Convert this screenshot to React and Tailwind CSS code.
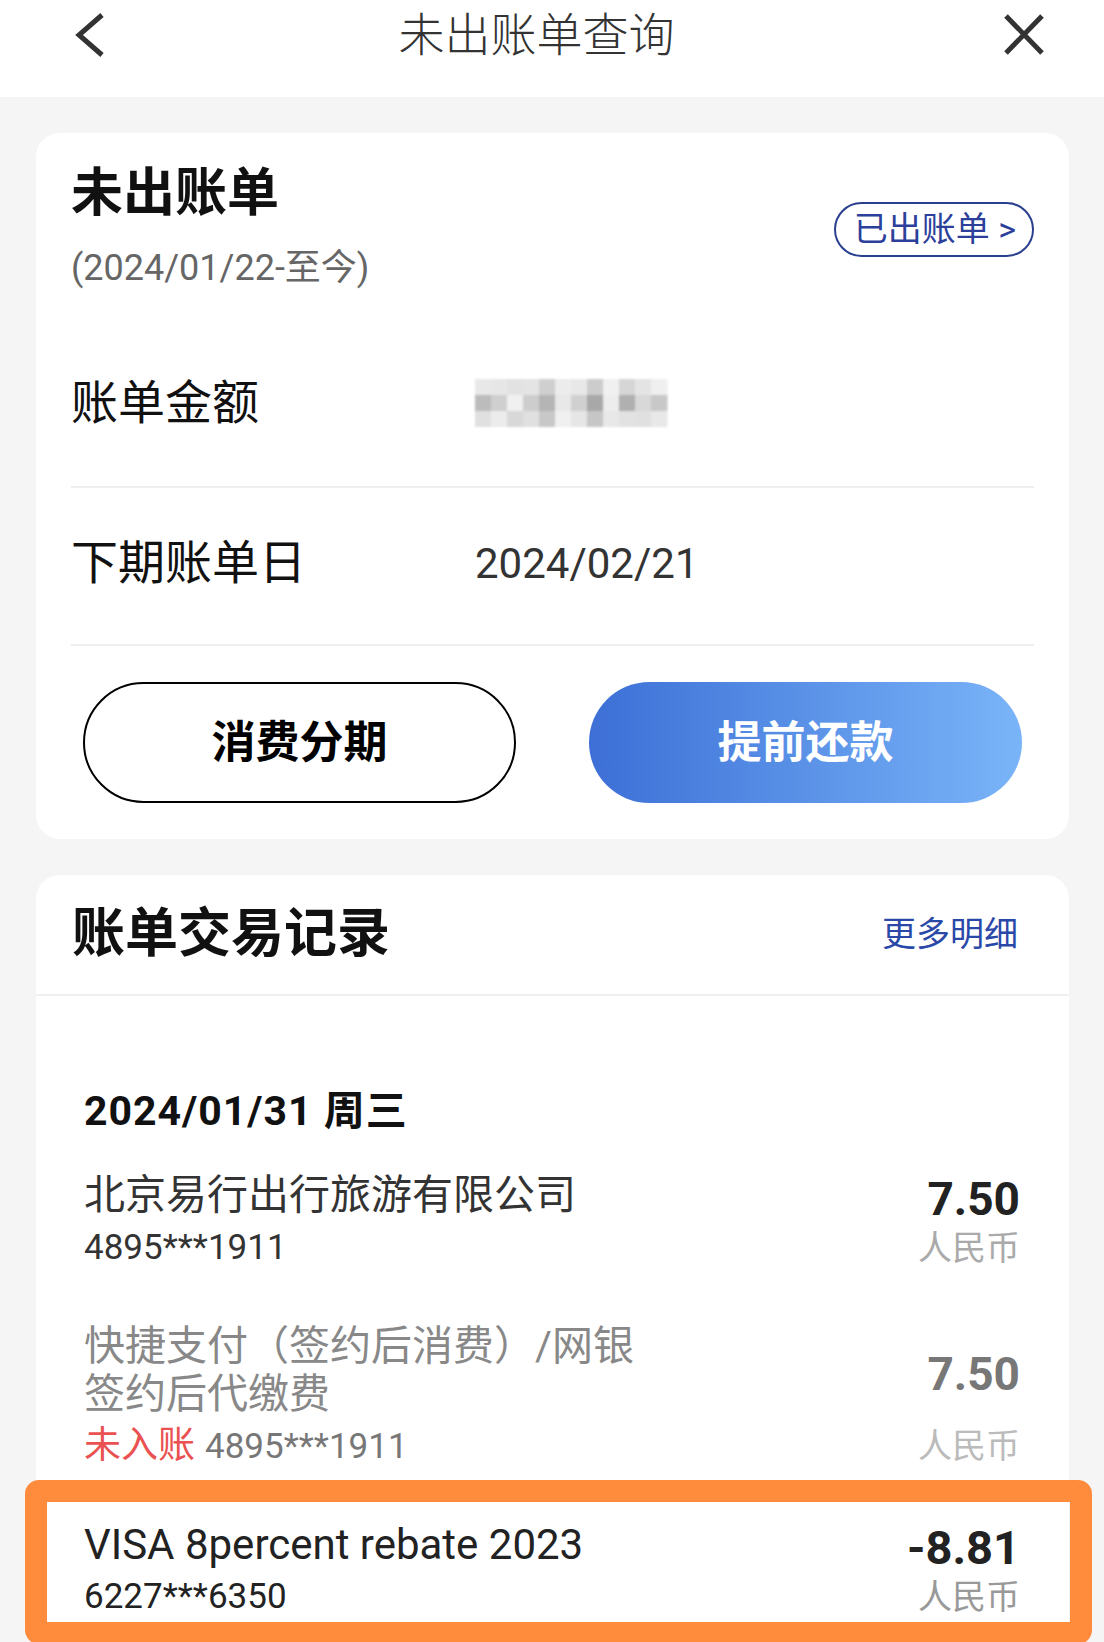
import React from "react";

const mosaic = [
  ["#e8e8e8", "#e6e6e6", "#e2e2e2", "#e4e4e4", "#cfcfcf", "#ececec", "#e8e8e8", "#cccccc", "#f0f0f0", "#d6d6d6", "#e4e4e4", "#efefef"],
  ["#bcbcbc", "#cfcfcf", "#f0f0f0", "#cdcdcd", "#b5b5b5", "#e8e8e8", "#d0d0d0", "#a8a8a8", "#ededed", "#b0b0b0", "#d8d8d8", "#c8c8c8"],
  ["#e0e0e0", "#ececec", "#d8d8d8", "#e0e0e0", "#c8c8c8", "#f0f0f0", "#e6e6e6", "#c6c6c6", "#e8e8e8", "#e2e2e2", "#e0e0e0", "#e8e8e8"],
];

// pixelated (hidden) amount
const BlurredAmount = () => (
  <svg width="205" height="48" viewBox="0 0 205 48" className="blur-[1px]">
    {mosaic.map((row, r) =>
      row.map((c, i) => (
        <rect key={`${r}-${i}`} x={i * 16} y={r * 16} width="16.5" height="16.5" fill={c} />
      ))
    )}
  </svg>
);

const App = () => {
  return (
    <div className="h-[1642px] w-[1104px] overflow-hidden bg-[#f5f5f5] font-[Roboto,'Noto_Sans_CJK_SC',sans-serif]">
      {/* Top bar */}
      <div className="h-[97px] bg-white">
        <div className="flex h-[70px] items-center pl-[67px] pr-[56px]">
          <svg width="48" height="48" viewBox="0 0 48 48" fill="none" stroke="#333" strokeWidth="5">
            <path d="M35 4 L12 24 L35 44" />
          </svg>
          <div className="flex-1 pr-[42px] text-center text-[46px] font-light leading-none text-[#333]">
            未出账单查询
          </div>
          <svg width="48" height="48" viewBox="0 0 48 48" fill="none" stroke="#333" strokeWidth="5">
            <path d="M6 5 L42 42 M42 5 L6 42" />
          </svg>
        </div>
      </div>

      {/* Unbilled summary card */}
      <div className="ml-[36px] mr-[35px] mt-[36px] rounded-[24px] bg-white px-[35px] pb-[36px] pt-[30px]">
        <div className="flex items-center justify-between">
          <div>
            <div className="text-[52px] font-bold leading-[62px] text-[#111]">未出账单</div>
            <div className="mt-[22px] text-[36px] leading-[42px] text-[#666]">(2024/01/22-至今)</div>
          </div>
          <div className="mt-[6px] flex h-[55px] items-center rounded-full border-2 border-[#2b3f8f] pl-[18px] pr-[16px] text-[34px] text-[#2c3f9a]">
            已出账单 &gt;
          </div>
        </div>

        <div className="mt-[87px] flex h-[54px] items-center">
          <div className="w-[404px] text-[47px] text-[#111]">账单金额</div>
          <BlurredAmount />
        </div>
        <div className="mt-[56px] h-[2px] bg-[#eeeeee]" />

        <div className="mt-[48px] flex h-[54px] items-center">
          <div className="w-[404px] text-[47px] text-[#111]">下期账单日</div>
          <div className="text-[42px] text-[#333]">2024/02/21</div>
        </div>
        <div className="mt-[54px] h-[2px] bg-[#eeeeee]" />

        <div className="mt-[36px] grid grid-cols-2 gap-[73px] px-[12px]">
          <button className="flex h-[121px] items-center justify-center rounded-full border-2 border-black text-[44px] font-bold text-black">
            消费分期
          </button>
          <button className="flex h-[121px] items-center justify-center rounded-full bg-linear-to-r from-[#3d6fd6] to-[#7ab4f8] text-[44px] font-bold text-white">
            提前还款
          </button>
        </div>
      </div>

      {/* Transactions card */}
      <div className="ml-[36px] mr-[35px] mt-[36px] rounded-t-[24px] bg-white pb-[60px]">
        <div className="flex h-[119px] items-center justify-between pl-[36px] pr-[51px]">
          <div className="text-[53px] font-bold text-[#111]">账单交易记录</div>
          <div className="text-[34px] text-[#2a48a8]">更多明细</div>
        </div>
        <div className="h-[2px] bg-[#f0f0f0]" />

        <div className="pl-[48px] pr-[49px] pt-[91px]">
          <div className="text-[41px] font-bold leading-[48px] tracking-[1px] text-[#111]">2024/01/31 周三</div>

          {/* row 1 */}
          <div className="mt-[36px] flex justify-between">
            <div>
              <div className="text-[41px] leading-[48px] text-[#333]">北京易行出行旅游有限公司</div>
              <div className="mt-[8px] text-[35px] leading-[42px] text-[#333]">4895***1911</div>
            </div>
            <div className="flex flex-col items-end">
              <div className="text-[46px] font-bold leading-[56px] text-[#222]">7.50</div>
              <div className="text-[34px] leading-[42px] text-[#aaa]">人民币</div>
            </div>
          </div>

          {/* row 2 */}
          <div className="mt-[53px] flex justify-between">
            <div>
              <div className="text-[41px] leading-[48px] text-[#888]">
                快捷支付（签约后消费）/网银
                <br />
                签约后代缴费
              </div>
              <div className="mt-[7px] flex items-baseline gap-[10px] leading-[42px]">
                <span className="text-[37px] text-[#ea5151]">未入账</span>
                <span className="text-[35px] text-[#777]">4895***1911</span>
              </div>
            </div>
            <div className="flex flex-col items-end pt-[24px]">
              <div className="text-[46px] font-bold leading-[56px] text-[#777]">7.50</div>
              <div className="mt-[23px] text-[34px] leading-[42px] text-[#bbb]">人民币</div>
            </div>
          </div>

          {/* row 3, highlighted */}
          <div className="relative mt-[35px] flex justify-between pb-[4px] pt-[18px]">
            <div className="absolute -bottom-[22px] -left-[59px] -right-[72px] -top-[23px] rounded-[14px] border-[22px] border-[#ff8b3d]" />
            <div>
              <div className="text-[42px] leading-[48px] text-[#222]">VISA 8percent rebate 2023</div>
              <div className="mt-[7px] text-[35px] leading-[42px] text-[#222]">6227***6350</div>
            </div>
            <div className="flex flex-col items-end">
              <div className="text-[47px] font-bold leading-[54px] text-[#222]">-8.81</div>
              <div className="mt-[1px] text-[34px] leading-[42px] text-[#999]">人民币</div>
            </div>
          </div>
        </div>
      </div>
    </div>
  );
};

export default App;
